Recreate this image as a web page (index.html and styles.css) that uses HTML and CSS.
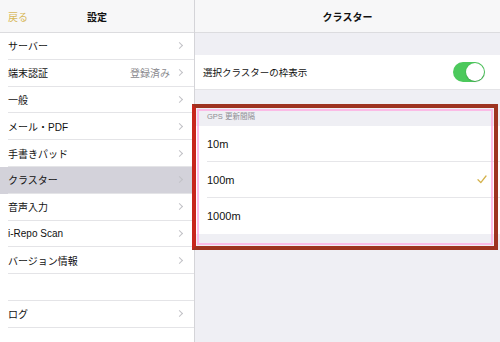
FILE: index.html
```html
<!DOCTYPE html>
<html lang="ja">
<head>
<meta charset="utf-8">
<link rel="stylesheet" href="styles.css">
</head>
<body>
<div class="app">
  <aside class="master">
    <header class="nav">
      <span class="back">戻る</span>
      <span class="title">設定</span>
      <span></span>
    </header>
    <ul class="list">
      <li class="item"><div class="in"><span class="label">サーバー</span><span class="chev"></span></div></li>
      <li class="item"><div class="in"><span class="label">端末認証</span><span class="detail">登録済み</span><span class="chev"></span></div></li>
      <li class="item"><div class="in"><span class="label">一般</span><span class="chev"></span></div></li>
      <li class="item"><div class="in"><span class="label">メール・PDF</span><span class="chev"></span></div></li>
      <li class="item"><div class="in"><span class="label">手書きパッド</span><span class="chev"></span></div></li>
      <li class="item selected"><div class="in"><span class="label">クラスター</span><span class="chev"></span></div></li>
      <li class="item"><div class="in"><span class="label">音声入力</span><span class="chev"></span></div></li>
      <li class="item"><div class="in"><span class="label">i-Repo Scan</span><span class="chev"></span></div></li>
      <li class="item"><div class="in"><span class="label">バージョン情報</span><span class="chev"></span></div></li>
      <li class="item"><div class="in"></div></li>
      <li class="item"><div class="in"><span class="label">ログ</span><span class="chev"></span></div></li>
    </ul>
  </aside>
  <main class="detail-pane">
    <header class="nav nav-right">
      <span class="title">クラスター</span>
    </header>
    <div class="body">
      <div class="toggle-row">
        <span class="label">選択クラスターの枠表示</span>
        <span class="switch"><span class="knob"></span></span>
      </div>
      <div class="section-head">GPS 更新間隔</div>
      <ul class="options">
        <li class="opt"><div class="opt-in">10m</div></li>
        <li class="opt"><div class="opt-in">100m<svg class="check" width="10" height="9" viewBox="0 0 10 9"><path d="M1 4.8 L3.8 7.6 L9 1" fill="none" stroke="#d4b24c" stroke-width="1.3" stroke-linecap="round" stroke-linejoin="round"/></svg></div></li>
        <li class="opt last"><div class="opt-in">1000m</div></li>
      </ul>
    </div>
  </main>
  <div class="highlight"></div>
</div>
</body>
</html>
```

FILE: styles.css
```css
* { box-sizing: border-box; }
html, body { margin: 0; padding: 0; }
body {
  width: 500px;
  height: 342px;
  overflow: hidden;
  font-family: "Liberation Sans", "Noto Sans CJK JP", sans-serif;
  color: #111;
  background: #fff;
}
.app {
  position: relative;
  display: flex;
  width: 500px;
  height: 342px;
}
.master {
  width: 195px;
  flex: none;
  border-right: 1px solid #d4d4d8;
  background: #fff;
}
.nav {
  height: 33px;
  background: #f7f7f8;
  border-bottom: 1px solid #dcdcdf;
  display: grid;
  grid-template-columns: 1fr auto 1fr;
  align-items: center;
  padding: 0 8px;
}
.back {
  font-size: 10px;
  color: #d8b95c;
}
.title {
  font-size: 10px;
  font-weight: bold;
  color: #111;
}
.list {
  list-style: none;
  margin: 0;
  padding: 0;
}
.item {
  height: 26.8px;
  padding-left: 8px;
  background: #fff;
}
.item.selected { background: #d3d2da; }
.in {
  height: 100%;
  display: flex;
  align-items: center;
  border-bottom: 1px solid #e4e4e7;
  padding-right: 10px;
  font-size: 10px;
}
.label { flex: 1; }
.detail {
  color: #8a8a8e;
  margin-right: 7px;
}
.chev {
  width: 5px;
  height: 5px;
  border-top: 1px solid #c2c2c7;
  border-right: 1px solid #c2c2c7;
  transform: rotate(45deg);
  margin-right: 2px;
}
.detail-pane {
  flex: 1;
  display: flex;
  flex-direction: column;
  background: #efeff4;
}
.nav-right {
  grid-template-columns: 1fr;
  justify-items: center;
}
.body {
  flex: 1;
  padding-top: 22px;
}
.toggle-row {
  height: 35px;
  background: #fff;
  display: flex;
  align-items: center;
  padding: 0 15px 0 8px;
  font-size: 9.5px;
  border-bottom: 1px solid #e4e4e7;
}
.switch {
  width: 32px;
  height: 20px;
  border-radius: 10px;
  background: #4cc95c;
  position: relative;
  display: block;
}
.knob {
  position: absolute;
  right: 1px;
  top: 1px;
  width: 18px;
  height: 18px;
  border-radius: 50%;
  background: #fff;
  box-shadow: 0 0.5px 1.5px rgba(0,0,0,0.3);
}
.section-head {
  height: 36px;
  padding: 0 0 5px 12px;
  display: flex;
  align-items: flex-end;
  font-size: 7.5px;
  color: #8e8e93;
}
.options {
  list-style: none;
  margin: 0;
  padding: 0;
  background: #fff;
}
.opt {
  height: 36px;
  padding-left: 12px;
}
.opt-in {
  height: 100%;
  display: flex;
  align-items: center;
  justify-content: space-between;
  padding-right: 13px;
  border-bottom: 1px solid #e6e6e9;
  font-size: 11px;
}
.opt.last .opt-in { border-bottom: none; }
.highlight {
  position: absolute;
  left: 192px;
  top: 104px;
  width: 306px;
  height: 146px;
  border: 4px solid #9e3320;
  border-left-color: #c8261c;
}
.highlight::after {
  content: "";
  position: absolute;
  left: 1px;
  top: 1px;
  right: 1px;
  bottom: 1px;
  border: 2px solid rgba(255, 170, 225, 0.75);
}
```
